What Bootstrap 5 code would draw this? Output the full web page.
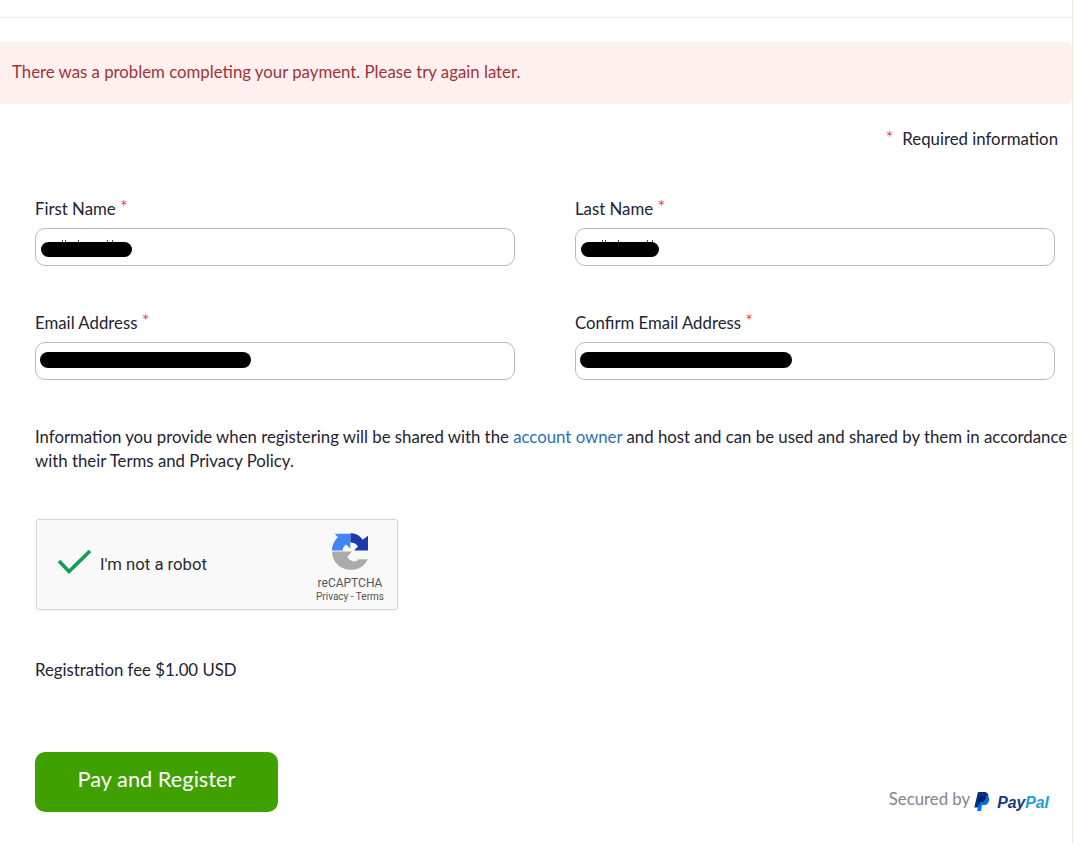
<!DOCTYPE html>
<html lang="en">
<head>
  <meta charset="UTF-8" />
  <meta name="viewport" content="width=device-width, initial-scale=1.0" />
  <title>Registration</title>
  <link href="https://cdn.jsdelivr.net/npm/bootstrap@5.3.3/dist/css/bootstrap.min.css" rel="stylesheet" />
  <style>
    body {
      font-family: "Lato", "Liberation Sans", sans-serif;
      font-size: 16.8px;
      line-height: 24px;
      color: #232333;
      background: #fff;
    }
    .page-wrap {
      width: 1073px;
      height: 843px;
      padding-top: 17px;
      border-right: 1px solid #e4efdc;
      overflow: hidden;
    }
    .top-rule { height: 1px; background: #ededf0; }
    .pay-alert {
      height: 62px;
      margin: 24px 0 0;
      padding: 0 12px 2px;
      border: 0;
      border-radius: 0 6px 6px 0;
      background: #fff0f0;
      color: #a23237;
      display: flex;
      align-items: center;
    }
    .req-line { height: 24px; margin-top: 23px; padding-right: 14px; }
    .req-star { color: #e8485f; font-size: 18px; line-height: 1; margin-right: 9px; position: relative; top: -1px; }
    .field-area { padding: 0 17px 0 35px; margin-top: 46px; }
    .field-row { --bs-gutter-x: 60px; margin-bottom: 45px; }
    .field-label { margin-bottom: 7px; line-height: 24px; }
    .field-label i { color: #e8485f; font-style: normal; font-size: 18px; line-height: 1; position: relative; top: -2px; }
    .field-box { position: relative; }
    .field-input { height: 38px; border: 1px solid #babac0; border-radius: 10px; }
    .blackout {
      position: absolute;
      left: 6px;
      top: 14px;
      height: 15px;
      border-radius: 8px;
      background: #000;
    }
    /* bits of the hidden name that show above the marker */
    .blackout-name::before {
      content: "";
      position: absolute;
      left: 21px;
      top: -2px;
      width: 1px;
      height: 2px;
      background: #444;
      box-shadow: 3px 0 #444, 16px 0 #444, 45px 0 #444, 50px 0 #444;
    }
    .blackout-mail { top: 10px; height: 16px; left: 5px; }
    .share-note { padding: 0 0 0 35px; margin: 0; }
    .share-note a { color: #2d6ebd; text-decoration: none; }
    .captcha-box {
      width: 362px;
      height: 91px;
      margin: 46px 0 0 36px;
      padding: 0 12px 0 20px;
      border: 1px solid #d6d6d6;
      border-radius: 3px;
      background: #f9f9f9;
      box-shadow: 0 0 3px rgba(0, 0, 0, .08);
      font-family: Roboto, "Liberation Sans", sans-serif;
    }
    .captcha-text { font-size: 16.7px; margin-left: 9px; color: #2b2b2b; }
    .captcha-brand { width: 70px; text-align: center; color: #555; padding-top: 13px; }
    .captcha-brand svg { display: block; margin: 0 auto 6px; }
    .captcha-name { font-size: 12px; line-height: 15px; }
    .captcha-links { font-size: 10px; line-height: 11px; white-space: nowrap; }
    .fee-line { margin: 48px 0 0; padding-left: 35px; }
    .pay-row { margin-top: 70px; padding: 0 23px 0 35px; }
    .pay-btn {
      width: 243px;
      height: 60px;
      padding: 0 0 5px;
      border: 0;
      border-radius: 10px;
      background: #3fa000;
      color: #fff;
      font-size: 21.8px;
    }
    .pay-btn:hover { background: #3fa000; color: #fff; }
    .secured { color: #85858f; font-size: 16.8px; margin-top: 35px; }
    .secured svg { margin: 5px 7px 0 4px; }
    .paypal-word {
      margin-top: 6px;
      white-space: nowrap;
      font-family: "Liberation Sans", sans-serif;
      font-weight: 700;
      font-style: italic;
      font-size: 15.8px;
      line-height: 20px;
    }
    .paypal-word b { color: #123a82; }
    .paypal-word em { color: #1c9ddb; font-style: italic; }
  </style>
</head>

<body>
  <div class="page-wrap">
    <div class="top-rule"></div>

    <div class="alert pay-alert" role="alert">There was a problem completing your payment. Please try again later.</div>

    <div class="req-line text-end"><span class="req-star">*</span>Required information</div>

    <form class="field-area">
      <div class="row field-row">
        <div class="col-6">
          <label class="field-label d-block">First Name <i>*</i></label>
          <div class="field-box">
            <input type="text" class="form-control field-input" />
            <span class="blackout blackout-name" data-w="91"></span>
          </div>
        </div>
        <div class="col-6">
          <label class="field-label d-block">Last Name <i>*</i></label>
          <div class="field-box">
            <input type="text" class="form-control field-input" />
            <span class="blackout blackout-name" data-w="78"></span>
          </div>
        </div>
      </div>
      <div class="row field-row">
        <div class="col-6">
          <label class="field-label d-block">Email Address <i>*</i></label>
          <div class="field-box">
            <input type="text" class="form-control field-input" />
            <span class="blackout blackout-mail" data-w="211"></span>
          </div>
        </div>
        <div class="col-6">
          <label class="field-label d-block">Confirm Email Address <i>*</i></label>
          <div class="field-box">
            <input type="text" class="form-control field-input" />
            <span class="blackout blackout-mail" data-w="212"></span>
          </div>
        </div>
      </div>
    </form>

    <p class="share-note">Information you provide when registering will be shared with the <a href="#">account owner</a> and host and can be used and shared by them in accordance with their Terms and Privacy Policy.</p>

    <div class="captcha-box d-flex align-items-center justify-content-between">
      <div class="d-flex align-items-center">
        <svg width="34" height="30" viewBox="0 0 34 30"><path d="M2 11l10 10.500L33 1" fill="none" stroke="#0f9d58" stroke-width="3.600"/></svg>
        <span class="captcha-text">I'm not a robot</span>
      </div>
      <div class="captcha-brand align-self-start">
        <svg width="36" height="37" viewBox="0 0 108 110">
          <path fill="#ababab" d="M0 55H60L46 70C50 80 58 84 66 84C72 84 76 82 80 78H107C100 97 80 110 55 110C25 110 0 85 0 55Z"/>
          <path fill="#1c3aa9" d="M55 0C72 0 85 8 92 20L108 8V52H66L78 40C74 33 66 28 55 28Z"/>
          <path fill="#4285f4" d="M0 52C0 36 7 22 18 12L8 2H55V46L42 34C36 38 32 45 32 52Z"/>
        </svg>
        <div class="captcha-name">reCAPTCHA</div>
        <div class="captcha-links">Privacy - Terms</div>
      </div>
    </div>

    <p class="fee-line">Registration fee $1.00 USD</p>

    <div class="pay-row d-flex justify-content-between align-items-start">
      <button type="button" class="btn pay-btn">Pay and Register</button>
      <div class="secured d-flex align-items-start">
        <span>Secured by</span>
        <svg width="16" height="19" viewBox="0 0 17 21">
          <path fill="#003087" d="M4 0h6.500C14 0 16 2 15.400 5.200 14.700 9 12 11 8.500 11H6L4.800 17H0Z"/>
          <path fill="#0070e0" d="M6 4h6c3 0 5 2 4.500 5-.6 3.500-3 5.500-6.500 5.500H8.500L7.500 21H3.200Z"/>
          <path fill="#001c64" d="M6 4h6.200c.6 1.800.4 3.500-.4 5-1 1.400-2.200 2-4 2H6.500L5.400 15 4 11Z"/>
        </svg>
        <div class="paypal-word"><b>Pay</b><em>Pal</em></div>
      </div>
    </div>
  </div>

  <script>
    // redaction widths come from the data attributes
    document.querySelectorAll(".blackout").forEach(function (el) {
      el.style.width = el.dataset.w + "px";
    });
  </script>
  <script src="https://cdn.jsdelivr.net/npm/bootstrap@5.3.3/dist/js/bootstrap.bundle.min.js"></script>
</body>
</html>
